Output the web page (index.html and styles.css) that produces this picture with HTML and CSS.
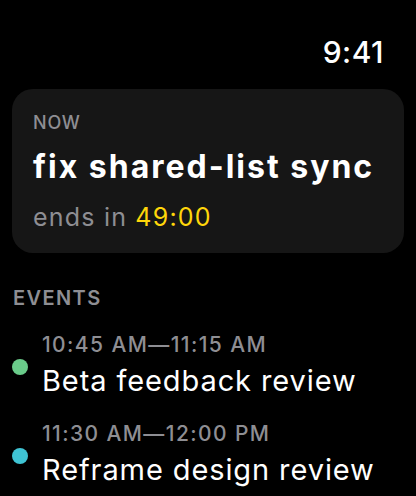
FILE: index.html
```html
<!DOCTYPE html>
<html>
<head>
<meta charset="utf-8">
<link rel="stylesheet" href="styles.css">
</head>
<body>
<div class="screen">
  <div class="status"><span class="clock">9:41</span></div>
  <div class="card">
    <div class="card-label">NOW</div>
    <div class="card-title">fix shared-list sync</div>
    <div class="card-sub">ends in <span class="countdown">49:00</span></div>
  </div>
  <div class="section-label">EVENTS</div>
  <div class="events">
    <div class="event">
      <span class="dot dot-green"></span>
      <div class="event-text">
        <div class="event-time">10:45 AM—11:15 AM</div>
        <div class="event-title">Beta feedback review</div>
      </div>
    </div>
    <div class="event">
      <span class="dot dot-cyan"></span>
      <div class="event-text">
        <div class="event-time">11:30 AM—12:00 PM</div>
        <div class="event-title">Reframe design review</div>
      </div>
    </div>
  </div>
</div>
</body>
</html>
```
FILE: styles.css
```css
html, body {
  margin: 0;
  padding: 0;
  background: #000;
}
body {
  font-family: Inter, "Noto Sans", sans-serif;
  color: #fff;
  width: 416px;
  height: 496px;
  overflow: hidden;
}
.screen {
  display: flex;
  flex-direction: column;
}
.status {
  display: flex;
  justify-content: flex-end;
  padding: 34px 32px 0 0;
}
.clock {
  font-size: 30px;
  line-height: 36px;
  font-weight: 500;
  letter-spacing: 0.5px;
}
.card {
  margin: 19px 12px 0;
  background: #161616;
  border-radius: 21px;
  padding: 23px 21px 21px;
  display: flex;
  flex-direction: column;
}
.card-label {
  font-size: 18px;
  line-height: 22px;
  font-weight: 500;
  color: #8e8e93;
  letter-spacing: 0.8px;
}
.card-title {
  font-size: 32px;
  line-height: 40px;
  font-weight: 700;
  margin-top: 13px;
  letter-spacing: 2px;
}
.card-sub {
  font-size: 25px;
  line-height: 30px;
  color: #8e8e93;
  margin-top: 15px;
  letter-spacing: 1.2px;
}
.countdown {
  color: #ffd60a;
}
.section-label {
  font-size: 20px;
  line-height: 24px;
  font-weight: 600;
  color: #8e8e93;
  margin: 33px 0 0 13px;
  letter-spacing: 1.4px;
}
.events {
  display: flex;
  flex-direction: column;
  gap: 22px;
  margin-top: 22px;
}
.event {
  display: flex;
  align-items: center;
  gap: 14px;
  padding-left: 12px;
}
.dot {
  width: 16px;
  height: 16px;
  border-radius: 50%;
  flex: none;
  margin-top: 2px;
}
.dot-green { background: #6acb8a; }
.dot-cyan { background: #3fc4d4; }
.event-text {
  display: flex;
  flex-direction: column;
}
.event-time {
  font-size: 21px;
  line-height: 26px;
  font-weight: 500;
  color: #8e8e93;
  letter-spacing: 1.4px;
}
.event-title {
  font-size: 29px;
  line-height: 36px;
  margin-top: 5px;
  letter-spacing: 0.9px;
}
```
